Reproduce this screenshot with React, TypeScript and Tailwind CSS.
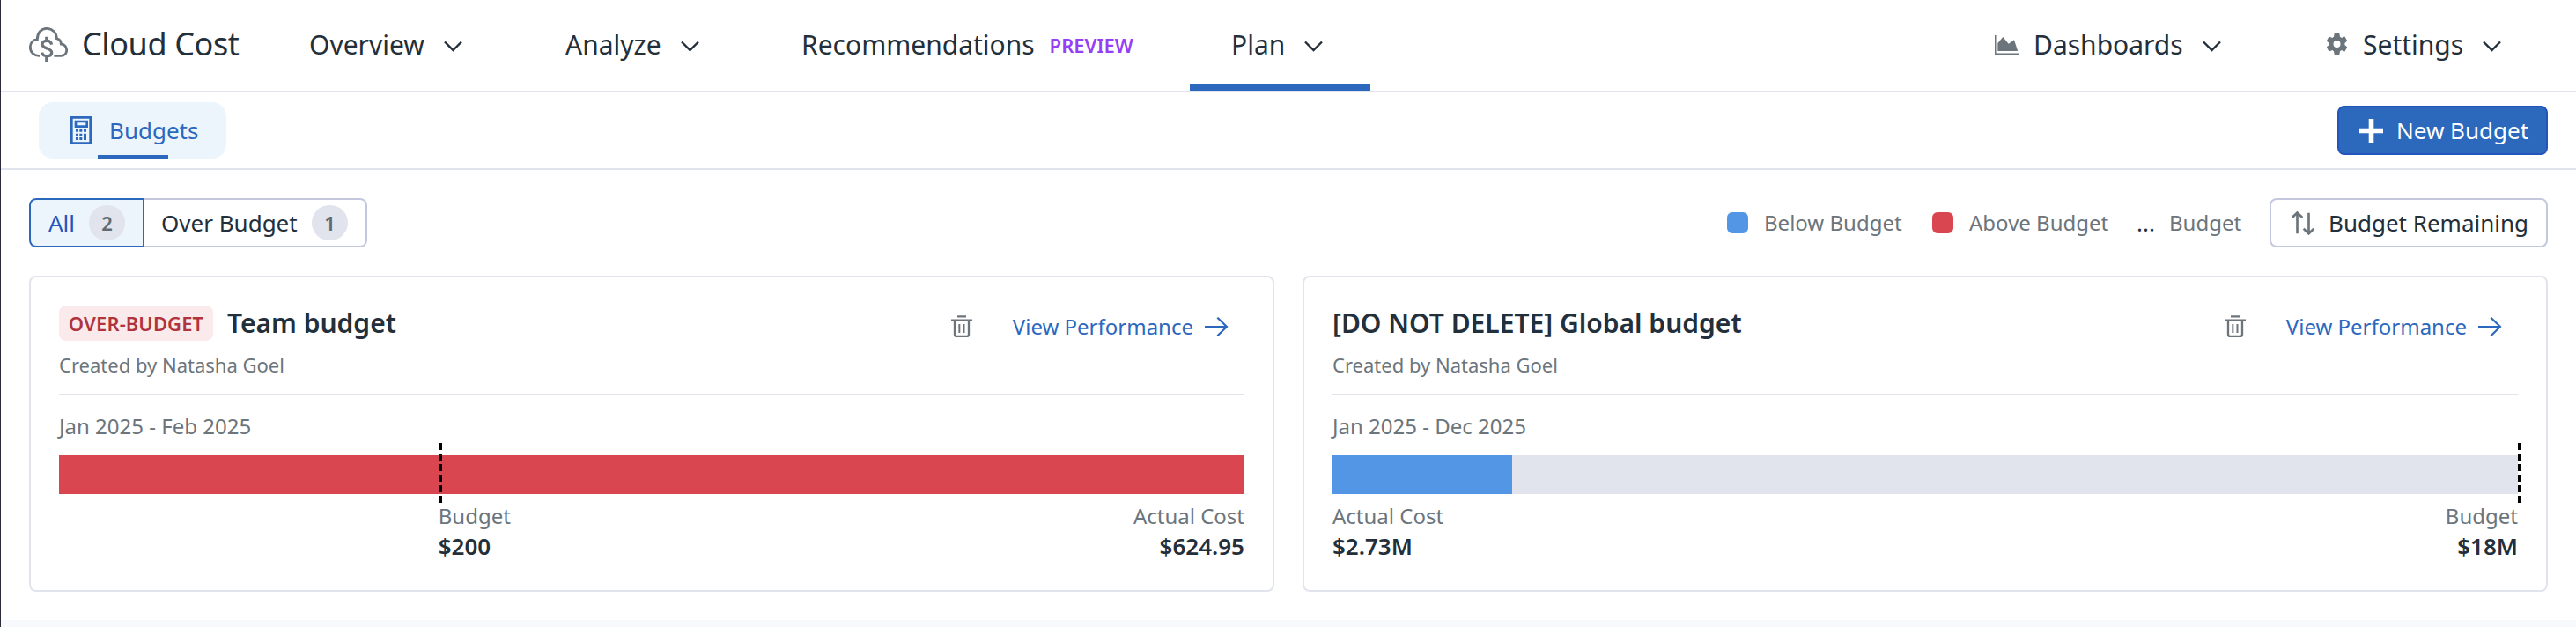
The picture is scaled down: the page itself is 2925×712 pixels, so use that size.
import React from "react";

function Chevron() {
  return (
    <svg className="mt-1.5 h-[14px] w-[21px] shrink-0" viewBox="0 0 21 14" fill="none" stroke="#232f3a" strokeWidth="2.4">
      <path d="M1 1.5 10.5 11 20 1.5" />
    </svg>
  );
}

function CloudDollarIcon() {
  return (
    <svg className="h-[39px] w-[44px] shrink-0" viewBox="39 65 132 117" fill="none" stroke="#6c757c">
      <path
        strokeWidth="8.5"
        d="M75 162C56 163 43 150 43 134C43 118 53 107 67 106C67 84 80 69 99 69C119 69 133 84 133 103C143 106 148 113 148 122C159 123 167 131 167 143C167 154 159 162 148 162L124 162"
      />
      <path
        strokeWidth="10"
        d="M116 124C114 115 108 111 100 111C91 111 84 116 84 123C84 132 91 134 100 137C109 140 116 143 116 151C116 159 109 163 100 163C91 163 84 159 83 151"
      />
      <path strokeWidth="11" d="M99 97V112M99 163V182" />
    </svg>
  );
}

function CalculatorIcon() {
  return (
    <svg className="h-8 w-6 shrink-0" viewBox="180 366 72 96" fill="#2c68bd">
      <path fillRule="evenodd" d="M180 366H252V462H180ZM188 374V454H244V374Z" />
      <path fillRule="evenodd" d="M194 380H240V405H194ZM202 388V397H232V388Z" />
      <path d="M198 411h8v8h-8zM211 411h9v8h-9zM225 411h9v8h-9zM198 425h8v8h-8zM211 425h9v8h-9zM198 438h8v9h-8zM211 438h9v9h-9zM225 425h9v22h-9z" />
    </svg>
  );
}

function AreaChartIcon() {
  return (
    <svg className="h-[22px] w-[28px] shrink-0" viewBox="45 60 84 66" fill="#6c757c">
      <path d="M45 60H49.500V121.500H129V126H45Z" />
      <path d="M55 114V87L73 66L92 89L111 76L123.500 114Z" />
    </svg>
  );
}

function GearIcon() {
  return (
    <svg className="h-6 w-[23px] shrink-0" viewBox="-34.500 -36 69 72" fill="none" stroke="#6c757c">
      <circle r="19.500" strokeWidth="15" />
      {[0, 60, 120, 180, 240, 300].map((a) => (
        <path key={a} d="M-11 -22L-8.500 -36H8.500L11 -22Z" fill="#6c757c" stroke="none" transform={`rotate(${a})`} />
      ))}
    </svg>
  );
}

function SortIcon() {
  return (
    <svg className="h-[27px] w-[26px] shrink-0" viewBox="546 89 78 81" fill="none" stroke="#6c757c" strokeWidth="8">
      <path d="M565.500 94V165M548 110L565.500 93.500L583 110" />
      <path d="M604.500 94V164M587 148.500L604.500 165L622 148.500" />
    </svg>
  );
}

function TrashIcon() {
  return (
    <svg className="h-[25px] w-6 shrink-0" viewBox="228 114 72 75" fill="none" stroke="#6c757c">
      <path strokeWidth="7" d="M249 118H279M228 131H300" />
      <path strokeWidth="7" d="M240 131V179Q240 185.500 247 185.500H281Q288 185.500 288 179V131" />
      <path strokeWidth="6" d="M256 144V174M271.500 144V174" />
    </svg>
  );
}

function ArrowIcon() {
  return (
    <svg className="h-[22px] w-[27px] shrink-0" viewBox="1092 120 81 66" fill="none" stroke="#2c68bd" strokeWidth="6.5">
      <path d="M1092 153H1167M1135 122L1167 153L1135 184" />
    </svg>
  );
}

function NavItem({ label, className, active }: { label: string; className: string; active?: boolean }) {
  return (
    <div className={`relative flex h-[103px] items-center justify-between pb-[3px] pr-[54px] ${className}`}>
      <span>{label}</span>
      <Chevron />
      {active && <div className="absolute inset-x-0 bottom-0 h-2 bg-[#2c68bd]" />}
    </div>
  );
}

type Label = { name: string; value: string };

type Budget = {
  title: string;
  over?: boolean;
  period: string;
  fill: number;
  marker: number;
  left: Label;
  right: Label;
  leftAt: number;
};

const budgets: Budget[] = [
  {
    title: "Team budget",
    over: true,
    period: "Jan 2025 - Feb 2025",
    fill: 100,
    marker: 32.03,
    left: { name: "Budget", value: "$200" },
    right: { name: "Actual Cost", value: "$624.95" },
    leftAt: 32,
  },
  {
    title: "[DO NOT DELETE] Global budget",
    period: "Jan 2025 - Dec 2025",
    fill: 15.17,
    marker: 100,
    left: { name: "Actual Cost", value: "$2.73M" },
    right: { name: "Budget", value: "$18M" },
    leftAt: 0,
  },
];

function Amount({ name, value }: Label) {
  return (
    <div className="flex flex-col">
      <span className="h-[34px] text-[24px] leading-[34px] text-[#6c757c]">{name}</span>
      <span className="h-[34px] text-[26px] leading-[34px] font-semibold">{value}</span>
    </div>
  );
}

function BudgetCard({ b }: { b: Budget }) {
  return (
    <section className="h-[359px] rounded-lg border-2 border-[#e1e4ec] px-8 pt-8">
      <div className="flex h-10 items-center">
        {b.over && (
          <span className="mr-4 flex h-10 w-[175px] items-center justify-center rounded-lg bg-[#faeaec] text-[22px] font-semibold tracking-[0.1px] text-[#b0343d]">
            OVER-BUDGET
          </span>
        )}
        <h2 className="text-[30px] leading-10 font-semibold">{b.title}</h2>
        <div className="mt-[7px] ml-auto flex items-center pr-[18px] text-[24px] leading-8 text-[#2c68bd]">
          <TrashIcon />
          <span className="mr-[13px] ml-[46px]">View Performance</span>
          <ArrowIcon />
        </div>
      </div>
      <p className="mt-3 h-[48px] text-[22px] leading-[30px] text-[#6c757c]">Created by Natasha Goel</p>
      <div className="h-0.5 bg-[#e1e4ec]" />
      <p className="mt-[19px] text-[24px] leading-8 text-[#6c757c]">{b.period}</p>
      <div className="relative mt-[17px] h-11 bg-[#e1e4ec]">
        <div className={b.over ? "h-11 bg-[#d9464f]" : "h-11 bg-[#5296e5]"} style={{ width: `${b.fill}%` }} />
        <div
          className="absolute -top-3.5 h-[68px] w-1 bg-[repeating-linear-gradient(to_bottom,#000_0px,#000_8px,transparent_8px,transparent_12px)]"
          style={{ left: `${b.marker}%` }}
        />
      </div>
      <div className="mt-2 flex justify-between" style={{ paddingLeft: `${b.leftAt}%` }}>
        <Amount {...b.left} />
        <div className="text-right">
          <Amount {...b.right} />
        </div>
      </div>
    </section>
  );
}

function Count({ n }: { n: number }) {
  return (
    <span className="flex h-10 w-[41px] items-center justify-center rounded-full bg-[#e1e4ec] text-[22px] font-semibold text-[#5f6a72]">
      {n}
    </span>
  );
}

export default function App() {
  return (
    <div className="flex h-[712px] w-full flex-col border-l border-[#2b2b3b] bg-white font-['Noto_Sans',sans-serif] whitespace-nowrap text-[#232f3a]">
      <header className="flex h-[105px] shrink-0 border-b-2 border-[#e1e4ec] pr-[31px] pl-8 text-[30px]">
        <div className="flex h-[103px] w-[272px] items-center gap-4 pb-[3px]">
          <CloudDollarIcon />
          <span className="text-[36px] tracking-[-0.4px]">Cloud Cost</span>
        </div>
        <nav className="flex gap-4">
          <NavItem label="Overview" className="w-[274px] pl-[46px]" />
          <NavItem label="Analyze" className="ml-px w-[252px] pl-[46px]" />
          <div className="flex h-[103px] w-[471px] items-center pb-[3px] pl-[46px]">
            <span>Recommendations</span>
            <span className="mt-0.5 ml-[17px] text-[22px] font-semibold text-[#9640f5]">PREVIEW</span>
          </div>
          <NavItem label="Plan" className="w-[205px] pl-[47px]" active />
        </nav>
        <div className="ml-auto flex">
          <div className="flex h-[103px] w-[377px] items-center pb-[3px]">
            <span className="mt-0.5">
              <AreaChartIcon />
            </span>
            <span className="mr-[22px] ml-4">Dashboards</span>
            <Chevron />
          </div>
          <div className="flex h-[103px] w-[252px] items-center pb-[3px]">
            <GearIcon />
            <span className="mr-[22px] ml-[18px]">Settings</span>
            <Chevron />
          </div>
        </div>
      </header>

      <div className="flex h-[88px] shrink-0 items-center justify-between border-b-2 border-[#e1e4ec] pr-8 pl-[43px] text-[26px]">
        <div className="relative flex h-16 w-[213px] items-center rounded-2xl bg-[#ecf5fc] pl-9 text-[#2c68bd]">
          <CalculatorIcon />
          <span className="ml-5">Budgets</span>
          <div className="absolute bottom-0 left-[67px] h-1 w-20 bg-[#2c68bd]" />
        </div>
        <button className="flex h-14 w-[239px] items-center rounded-lg border-2 border-[#2455bd] bg-[#2c69bd] pl-[23px] text-white">
          <svg className="h-[27px] w-[27px]" viewBox="0 0 27 27" stroke="#fff" strokeWidth="5.6">
            <path d="M13.500 0V27M0 13.500H27" />
          </svg>
          <span className="ml-[15px]">New Budget</span>
        </button>
      </div>

      <main className="flex h-[511px] flex-col gap-8 pt-8 pr-8 pl-8">
        <div className="flex h-14 items-center">
          <div className="flex text-[26px]">
            <div className="flex h-14 w-[131px] items-center justify-between rounded-l-lg border-2 border-[#2c69bd] bg-[#ecf5fc] pr-5 pl-5 text-[#2455bd]">
              <span>All</span>
              <Count n={2} />
            </div>
            <div className="flex h-14 w-[253px] items-center justify-between rounded-r-lg border-2 border-l-0 border-[#c3c8de] pr-5 pl-[19px]">
              <span>Over Budget</span>
              <Count n={1} />
            </div>
          </div>
          <div className="ml-auto flex items-center text-[24px] text-[#6c757c]">
            <span className="mr-[18px] h-6 w-6 rounded-md bg-[#5296e5]" />
            <span className="w-[191px]">Below Budget</span>
            <span className="mr-[18px] h-6 w-6 rounded-md bg-[#d9464f]" />
            <span className="w-[190px]">Above Budget</span>
            <span className="w-[37px] text-[26px] text-[#232f3a]">...</span>
            <span className="w-[114px]">Budget</span>
          </div>
          <button className="flex h-14 w-[316px] items-center rounded-lg border-2 border-[#c3c8de] pl-[23px] text-[26px]">
            <SortIcon />
            <span className="ml-4">Budget Remaining</span>
          </button>
        </div>
        <div className="grid grid-cols-2 gap-8">
          {budgets.map((b) => (
            <BudgetCard key={b.title} b={b} />
          ))}
        </div>
      </main>
      <div className="h-2 bg-[#f8f9fc]" />
    </div>
  );
}
